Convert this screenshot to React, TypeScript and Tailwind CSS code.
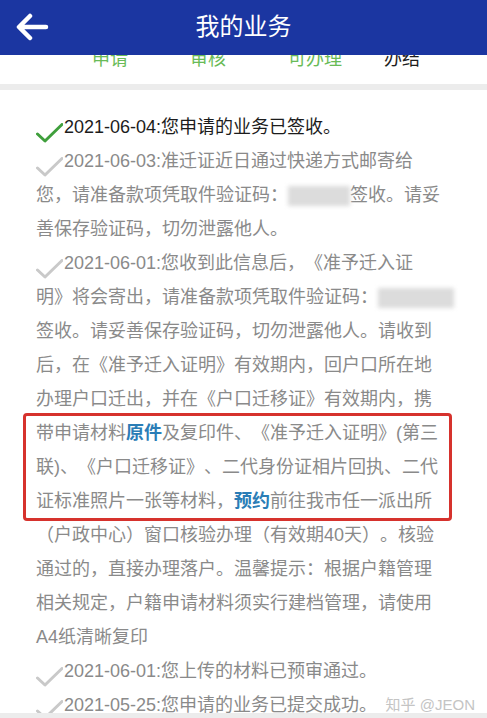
import React from "react";

const Check = ({ green }: { green?: boolean }) => (
  <svg width="27" height="20" viewBox="0 0 27 20" className="inline-block shrink-0 mr-[1px] translate-y-[5px]">
    <path
      d="M1.5 11 L9 18 L26 1.5"
      fill="none"
      stroke={green ? "#3f9f3c" : "#c9c9c9"}
      strokeWidth="3"
      strokeLinecap="round"
      strokeLinejoin="round"
    />
  </svg>
);

const Blur = ({ w }: { w: number }) => (
  <span className="inline-block align-middle h-[20px] bg-[#dcdcdc] blur-[2px]" style={{ width: w }} />
);

const Line = ({ children }: { children: React.ReactNode }) => (
  <div className="whitespace-nowrap h-[34px] leading-[34px]">{children}</div>
);

const Blue = ({ children }: { children: React.ReactNode }) => (
  <span className="text-[#2a7db6] font-semibold">{children}</span>
);

export default function App() {
  return (
    <div
      className="w-[487px] h-[718px] overflow-hidden flex flex-col bg-white [text-spacing-trim:space-all]"
      style={{ fontFamily: '"Liberation Sans", "Noto Sans CJK SC", sans-serif' }}
    >
      <header className="h-[55px] shrink-0 bg-[#1b36a1] flex items-center relative z-10">
        <svg width="34" height="30" viewBox="0 0 34 30" className="ml-[15px]">
          <path d="M31 14 H5 M15 3 L4 14 L15 25" fill="none" stroke="#fff" strokeWidth="4.5" strokeLinecap="round" strokeLinejoin="round" />
        </svg>
        <div className="absolute inset-0 flex items-center justify-center text-white text-[24px] pb-[1px]">我的业务</div>
      </header>
      <div className="h-[29px] shrink-0 bg-white overflow-hidden flex text-[18px] leading-[18px] pl-[92px]">
        <div className="w-[98px] -mt-[5px] text-[#69bb57]">申请</div>
        <div className="w-[98px] -mt-[5px] text-[#69bb57]">审核</div>
        <div className="w-[96px] -mt-[5px] text-[#69bb57]">可办理</div>
        <div className="-mt-[5px] text-[#1e1e1e]">办结</div>
      </div>
      <div className="h-[6px] shrink-0 bg-[#ececec]" />
      <div className="flex-1 overflow-hidden pt-[20px] pl-[36px] text-[18px] text-[#8a8a8a]">
        <Line>
          <Check green />
          <span className="text-[#1c1c1c]">2021-06-04:您申请的业务已签收。</span>
        </Line>
        <Line>
          <Check />
          2021-06-03:准迁证近日通过快递方式邮寄给
        </Line>
        <Line>
          您，请准备款项凭取件验证码：<Blur w={62} />签收。请妥
        </Line>
        <Line>善保存验证码，切勿泄露他人。</Line>
        <Line>
          <Check />
          2021-06-01:您收到此信息后，《准予迁入证
        </Line>
        <Line>
          明》将会寄出，请准备款项凭取件验证码：<Blur w={76} />
        </Line>
        <Line>签收。请妥善保存验证码，切勿泄露他人。请收到</Line>
        <Line>后，在《准予迁入证明》有效期内，回户口所在地</Line>
        <Line>办理户口迁出，并在《户口迁移证》有效期内，携</Line>
        <div className="-my-[3px] -ml-[13px] w-[429px] border-[3px] border-[#d6322d] rounded-[4px] pl-[10px]">
          <Line>
            带申请材料<Blue>原件</Blue>及复印件、《准予迁入证明》(第三
          </Line>
          <Line>联)、《户口迁移证》、二代身份证相片回执、二代</Line>
          <Line>
            证标准照片一张等材料，<Blue>预约</Blue>前往我市任一派出所
          </Line>
        </div>
        <Line>（户政中心）窗口核验办理（有效期40天）。核验</Line>
        <Line>通过的，直接办理落户。温馨提示：根据户籍管理</Line>
        <Line>相关规定，户籍申请材料须实行建档管理，请使用</Line>
        <Line>A4纸清晰复印</Line>
        <Line>
          <Check />
          2021-06-01:您上传的材料已预审通过。
        </Line>
        <div className="whitespace-nowrap h-[34px] leading-[34px] flex items-center">
          <Check />
          <span>2021-05-25:您申请的业务已提交成功。</span>
          <span className="ml-auto mr-[12px] text-[15px] text-[#c4c4c4]">知乎 @JEON</span>
        </div>
      </div>
      <div className="h-[5px] shrink-0 bg-[#ececec]" />
    </div>
  );
}
